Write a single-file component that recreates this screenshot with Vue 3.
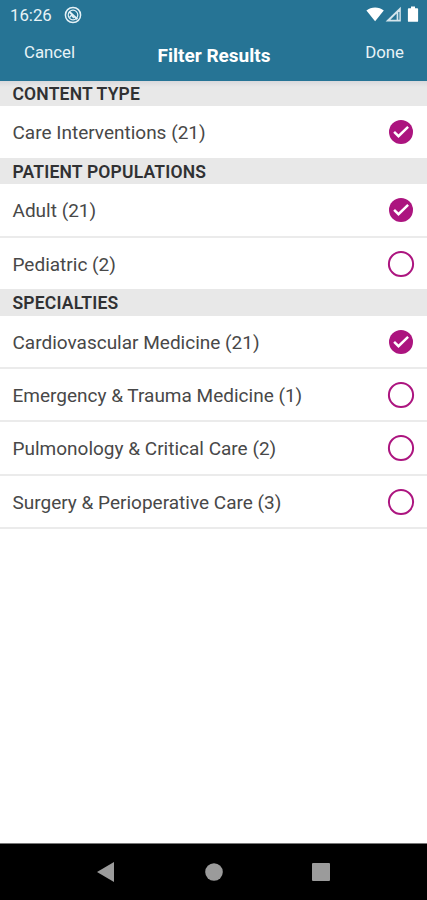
<script setup>
import { ref } from 'vue';

const sections = ref([
    {
        title: 'CONTENT TYPE',
        items: [{ name: 'Care Interventions', count: 21, checked: true }],
    },
    {
        title: 'PATIENT POPULATIONS',
        items: [
            { name: 'Adult', count: 21, checked: true },
            { name: 'Pediatric', count: 2, checked: false },
        ],
    },
    {
        title: 'SPECIALTIES',
        items: [
            { name: 'Cardiovascular Medicine', count: 21, checked: true },
            { name: 'Emergency & Trauma Medicine', count: 1, checked: false },
            { name: 'Pulmonology & Critical Care', count: 2, checked: false },
            { name: 'Surgery & Perioperative Care', count: 3, checked: false },
        ],
    },
]);

const toggle = (item) => {
    item.checked = !item.checked;
};
</script>

<template>
    <div class="screen">
        <header class="top">
            <div class="status">
                <span class="time">16:26</span>
                <svg class="app_icon" width="18" height="18" viewBox="0 0 18 18" fill="none" stroke="#e4f1f6">
                    <circle cx="9" cy="9" r="7.6" stroke-width="1.5" />
                    <circle cx="9" cy="9" r="4.8" stroke-width="1.2" />
                    <path d="M5 5.5L13.4 13.2" stroke-width="2" />
                    <path d="M5.5 11.5l2-2.4 2.3 3" stroke-width="1.3" />
                </svg>
                <svg class="signals" width="54" height="18" viewBox="0 0 54 18">
                    <path d="M0.4 4.4C5.1 0.5 13.1 0.5 17.8 4.4L9.1 15.2z" fill="#fff" />
                    <path d="M34.8 0.8V15.6H19.6z" fill="#d5e5ec" />
                    <path d="M30.6 7.6V13.7H24.4z" fill="#267495" />
                    <path d="M32.3 6v7.7h1.1V6z" fill="#267495" />
                    <path d="M45 0.6h4v1.6h2.2q.9 0 .9.9v11.8q0 .9-.9.9h-8.4q-.9 0-.9-.9V3.1q0-.9.9-.9H45z" fill="#fff" />
                </svg>
            </div>
            <div class="bar">
                <span class="btn">Cancel</span>
                <h1 class="title">Filter Results</h1>
                <span class="btn right">Done</span>
            </div>
        </header>

        <main class="list">
            <section v-for="section in sections" :key="section.title">
                <h2 class="heading">{{ section.title }}</h2>
                <div class="row" v-for="item in section.items" :key="item.name" @click="toggle(item)">
                    <span class="label">{{ item.name }} ({{ item.count }})</span>
                    <svg class="check" width="28" height="28" viewBox="0 0 28 28" fill="none">
                        <template v-if="item.checked">
                            <circle cx="14" cy="14" r="12" fill="#ac147f" />
                            <path d="M7.1 13.9L11.5 18.2L21.1 8.9" stroke="#fff" stroke-width="2.5" />
                        </template>
                        <circle v-else cx="14" cy="14" r="12.1" stroke="#ac147f" stroke-width="2" />
                    </svg>
                </div>
            </section>
        </main>

        <nav class="nav">
            <svg width="20" height="22" viewBox="0 0 20 22"><path d="M1 11L18 1v20z" fill="#9b9b9b" /></svg>
            <svg width="20" height="20" viewBox="0 0 20 20"><circle cx="10" cy="10" r="8.8" fill="#9b9b9b" /></svg>
            <svg width="20" height="20" viewBox="0 0 20 20"><rect x="1" y="1" width="18" height="18" rx="1" fill="#9b9b9b" /></svg>
        </nav>
    </div>
</template>

<style>
body {
    margin: 0;
}
</style>

<style scoped>
.screen {
    display: flex;
    flex-direction: column;
    width: 427px;
    height: 900px;
    background: #fff;
    font-family: Roboto, "Liberation Sans", sans-serif;
    overflow: hidden;
}

.top {
    height: 81px;
    background: #267495;
    color: #fff;
}

.status {
    display: flex;
    align-items: center;
    height: 30px;
    padding: 0 7px 0 10px;
}

.time {
    width: 54px;
    color: #e8f3f7;
    font-size: 16.8px;
    line-height: 32px;
}

.signals {
    margin-left: auto;
}

.bar {
    display: grid;
    grid-template-columns: 1fr auto 1fr;
    padding: 0 23px 0 24px;
}

.btn {
    padding-top: 11px;
    color: #e8f3f7;
    font-size: 16.8px;
    line-height: 22px;
}

.right {
    text-align: right;
}

.title {
    margin: 0;
    padding-top: 15px;
    font-size: 19px;
    font-weight: 700;
    line-height: 22px;
}

.list {
    flex: 1;
}

.heading {
    height: 26.5px;
    margin: 0;
    padding-left: 12.5px;
    background: #e8e8e8;
    color: #303133;
    font-size: 17.5px;
    font-weight: 600;
    letter-spacing: 0.18px;
    line-height: 28px;
}

section:first-child .heading {
    height: 25px;
    background: linear-gradient(#d9d9dc, #e8e8e8 6px);
    line-height: 26px;
}

.row {
    display: flex;
    align-items: center;
    justify-content: space-between;
    box-sizing: border-box;
    height: 53.3px;
    padding: 0.6px 12px 0 12.5px;
    border-bottom: 2px solid #ebebeb;
}

/* the next heading closes the section, so no line there */
section:not(:last-child) .row:last-child {
    height: 51.8px;
    border-bottom: none;
}

.label {
    padding-top: 0.6px;
    color: #484848;
    font-size: 19px;
    font-weight: 400;
}

.nav {
    display: flex;
    align-items: center;
    justify-content: space-between;
    box-sizing: border-box;
    height: 57px;
    padding: 0 96px;
    border-top: 1px solid #777;
    background: #000;
}
</style>
